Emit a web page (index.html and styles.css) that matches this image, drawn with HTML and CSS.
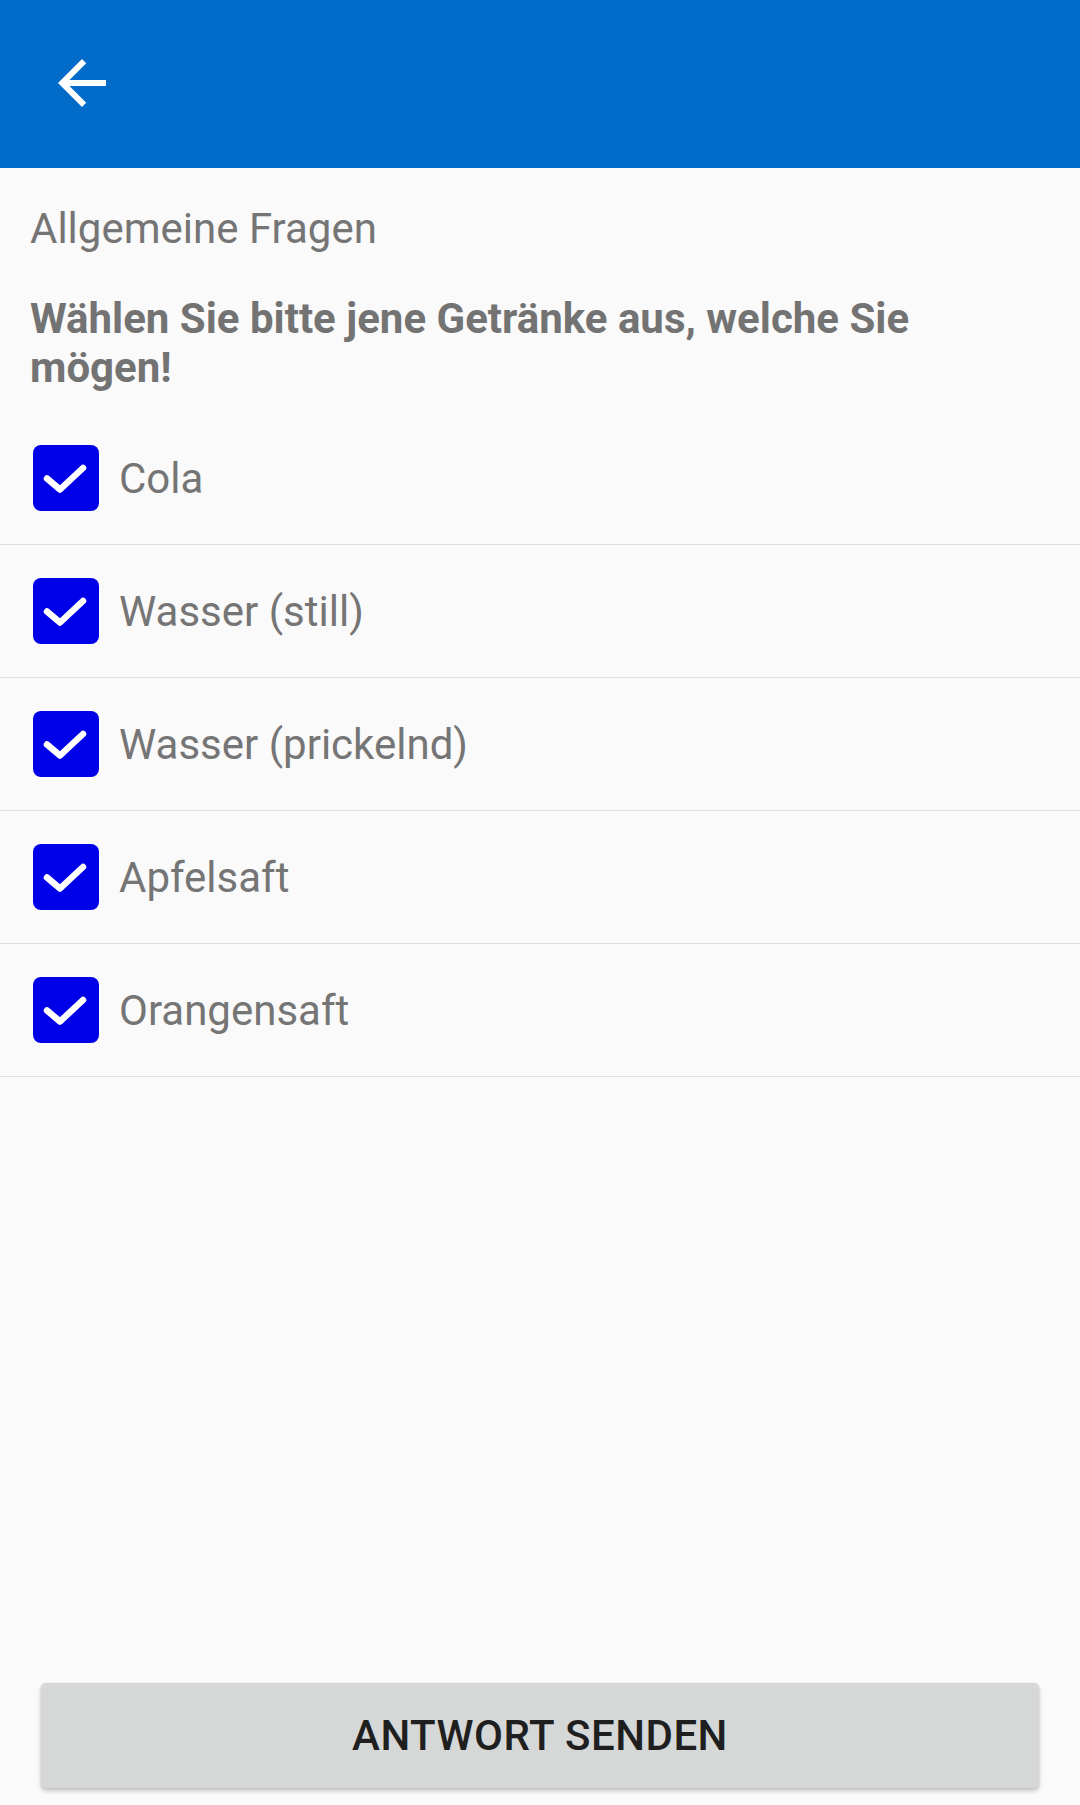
FILE: index.html
```html
<!DOCTYPE html>
<html lang="de">
<head>
<meta charset="utf-8">
<title>Allgemeine Fragen</title>
<link rel="stylesheet" href="styles.css">
</head>
<body>
<div class="app">
  <header class="toolbar">
    <button class="back" aria-label="Zurück">
      <svg viewBox="0 0 24 24" width="72" height="72"><path d="M20 11H7.83l5.59-5.59L12 4l-8 8 8 8 1.41-1.41L7.83 13H20v-2z" fill="#fff"/></svg>
    </button>
  </header>
  <main class="content">
    <h1 class="section">Allgemeine Fragen</h1>
    <p class="question">Wählen Sie bitte jene Getränke aus, welche Sie mögen!</p>
    <ul class="options">
      <li class="option"><span class="box"><svg viewBox="0 0 66 66" width="66" height="66"><path d="M14 33.5 L27 44.5 L50 23" fill="none" stroke="#fff" stroke-width="6.5" stroke-linecap="round" stroke-linejoin="round"/></svg></span><span class="label">Cola</span></li>
      <li class="option"><span class="box"><svg viewBox="0 0 66 66" width="66" height="66"><path d="M14 33.5 L27 44.5 L50 23" fill="none" stroke="#fff" stroke-width="6.5" stroke-linecap="round" stroke-linejoin="round"/></svg></span><span class="label">Wasser (still)</span></li>
      <li class="option"><span class="box"><svg viewBox="0 0 66 66" width="66" height="66"><path d="M14 33.5 L27 44.5 L50 23" fill="none" stroke="#fff" stroke-width="6.5" stroke-linecap="round" stroke-linejoin="round"/></svg></span><span class="label">Wasser (prickelnd)</span></li>
      <li class="option"><span class="box"><svg viewBox="0 0 66 66" width="66" height="66"><path d="M14 33.5 L27 44.5 L50 23" fill="none" stroke="#fff" stroke-width="6.5" stroke-linecap="round" stroke-linejoin="round"/></svg></span><span class="label">Apfelsaft</span></li>
      <li class="option"><span class="box"><svg viewBox="0 0 66 66" width="66" height="66"><path d="M14 33.5 L27 44.5 L50 23" fill="none" stroke="#fff" stroke-width="6.5" stroke-linecap="round" stroke-linejoin="round"/></svg></span><span class="label">Orangensaft</span></li>
    </ul>
  </main>
  <button class="send">ANTWORT SENDEN</button>
</div>
</body>
</html>
```
FILE: styles.css
```css
html, body {
  margin: 0;
  padding: 0;
  background: #fafafa;
}
body {
  font-family: Roboto, "Liberation Sans", sans-serif;
}
.app {
  display: flex;
  flex-direction: column;
  height: 1805px;
}
.toolbar {
  height: 168px;
  background: #006bc8;
  display: flex;
  align-items: flex-start;
  padding: 47px 0 0 46px;
  box-sizing: border-box;
  flex: none;
}
.back {
  border: 0;
  padding: 0;
  margin: 0;
  background: none;
  width: 72px;
  height: 72px;
  display: block;
}
.back svg { display: block; }
.content {
  flex: 1;
  display: flex;
  flex-direction: column;
}
.section {
  margin: 36px 0 0 30px;
  font-size: 42px;
  line-height: 49px;
  font-weight: 400;
  color: #757575;
}
.question {
  margin: 41px 30px 0 30px;
  font-size: 42px;
  line-height: 49px;
  font-weight: 700;
  color: #737373;
  max-width: 900px;
}
.options {
  list-style: none;
  margin: 20px 0 0 0;
  padding: 0;
}
.option {
  height: 132px;
  border-bottom: 1px solid #e0e0e0;
  display: flex;
  align-items: center;
  padding-left: 33px;
}
.box {
  width: 66px;
  height: 66px;
  border-radius: 8px;
  background: #0000e8;
  flex: none;
  display: block;
}
.box svg { display: block; }
.label {
  margin-left: 20px;
  font-size: 42px;
  line-height: 49px;
  color: #757575;
}
.send {
  flex: none;
  margin: 0 41px 17px 41px;
  height: 105px;
  border: 0;
  border-radius: 5px;
  background: #d6d7d7;
  box-shadow: 0 3px 4px rgba(0,0,0,0.22), 0 0 2px rgba(0,0,0,0.08);
  font-family: Roboto, "Liberation Sans", sans-serif;
  font-size: 42px;
  font-weight: 500;
  color: #1f1f1f;
  letter-spacing: 0.5px;
}
```
